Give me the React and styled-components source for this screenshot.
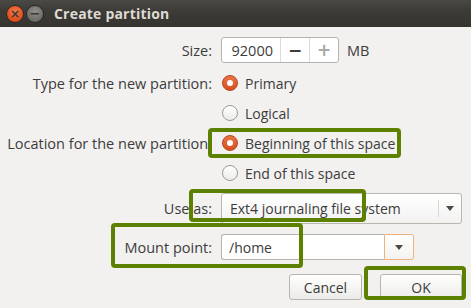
import React from "react"
import styled, { createGlobalStyle } from "styled-components"

const GlobalStyle = createGlobalStyle`
  html, body {
    margin: 0;
    padding: 0;
    background: #f2f1f0;
  }
  body {
    font-family: "Open Sans", "DejaVu Sans", sans-serif;
    font-size: 14px;
    color: #3c3c3c;
  }
`

const App = () => {
    return (
        <>
            <GlobalStyle />
            <Dialog>
                <TitleBar>
                    <WinButton $close>×</WinButton>
                    <WinButton>−</WinButton>
                    <Title>Create partition</Title>
                </TitleBar>
                <Form>
                    <Label>Size:</Label>
                    <Cell>
                        <SpinBox>
                            <SpinValue>92000</SpinValue>
                            <SpinBtn>−</SpinBtn>
                            <SpinBtn $disabled>+</SpinBtn>
                        </SpinBox>
                        <Unit>MB</Unit>
                    </Cell>

                    <Label $top={5}>Type for the new partition:</Label>
                    <Cell $top={5}>
                        <Radio $on />
                        <RadioText>Primary</RadioText>
                    </Cell>
                    <Label />
                    <Cell>
                        <Radio />
                        <RadioText>Logical</RadioText>
                    </Cell>

                    <Label>Location for the new partition:</Label>
                    <Cell>
                        <Radio $on />
                        <RadioText>Beginning of this space</RadioText>
                    </Cell>
                    <Label />
                    <Cell>
                        <Radio />
                        <RadioText>End of this space</RadioText>
                    </Cell>

                    <Label $top={5}>Use as:</Label>
                    <Cell $top={5}>
                        <Combo>
                            <ComboText>Ext4 journaling file system</ComboText>
                            <ComboArrow><Arrow /></ComboArrow>
                        </Combo>
                    </Cell>

                    <Label $top={10}>Mount point:</Label>
                    <Cell $top={10}>
                        <EntryCombo>
                            <EntryText>/home</EntryText>
                            <EntryArrow><Arrow /></EntryArrow>
                        </EntryCombo>
                    </Cell>
                </Form>
                <ButtonRow>
                    <Button>Cancel</Button>
                    <Button $wide>OK</Button>
                </ButtonRow>

                <Mark $x={208} $y={128} $w={193} $h={30} />
                <Mark $x={189} $y={189} $w={177} $h={33} />
                <Mark $x={111} $y={223} $w={192} $h={45} />
                <Mark $x={364} $y={266} $w={102} $h={34} />
            </Dialog>
        </>
    )
}

const Dialog = styled.div`
    position: relative;
    width: 471px;
    height: 308px;
    background: #f2f1f0;
    overflow: hidden;`

const TitleBar = styled.div`
    height: 27px;
    background: linear-gradient(#4a4944, #3c3b37 40%, #35342f);
    display: flex;
    align-items: center;
    padding-left: 6px;
    gap: 2px;`

const WinButton = styled.div`
    width: 18px;
    height: 18px;
    border-radius: 50%;
    box-sizing: border-box;
    display: flex;
    align-items: center;
    justify-content: center;
    font-family: "DejaVu Sans", sans-serif;
    font-size: ${p => p.$close ? '12px' : '13px'};
    font-weight: 700;
    line-height: 1;
    color: #3a3935;
    background: ${p => p.$close
        ? 'radial-gradient(circle at 50% 35%, #f27a4f, #e0531f 60%, #c8441a)'
        : 'radial-gradient(circle at 50% 35%, #8f8e88, #72716b 60%, #5f5e59)'};
    border: 1px solid #2a2926;`

const Title = styled.div`
    margin-left: 8px;
    font-weight: 700;
    font-size: 14px;
    color: #dfdbd2;
    letter-spacing: 0.2px;`

const Form = styled.div`
    display: grid;
    grid-template-columns: 212px 1fr;
    column-gap: 9px;
    padding-top: 10px;
    padding-right: 10px;`

const Label = styled.div`
    margin-top: ${p => p.$top || 0}px;
    display: flex;
    align-items: center;
    justify-content: flex-end;
    white-space: nowrap;
    text-align: right;
    font-size: 14.5px;`

const Cell = styled.div`
    margin-top: ${p => p.$top || 0}px;
    display: flex;
    align-items: center;
    min-height: 26px;`

const SpinBox = styled.div`
    display: flex;
    height: 26px;
    width: 118px;
    box-sizing: border-box;
    border: 1px solid #b6b3af;
    border-radius: 3px;
    background: #fff;
    overflow: hidden;`

const SpinValue = styled.div`
    flex: 1;
    display: flex;
    align-items: center;
    justify-content: flex-end;
    padding-right: 7px;
    font-size: 14.5px;`

const SpinBtn = styled.div`
    width: 28px;
    border-left: 1px solid #dcdad6;
    display: flex;
    align-items: center;
    justify-content: center;
    font-family: "DejaVu Sans", sans-serif;
    font-size: 17px;
    font-weight: 700;
    color: ${p => p.$disabled ? '#a9a9a6' : '#3c3c3c'};`

const Unit = styled.div`
    margin-left: 8px;
    font-size: 14.5px;`

const Radio = styled.div`
    width: 16px;
    height: 16px;
    box-sizing: border-box;
    border-radius: 50%;
    position: relative;
    flex-shrink: 0;
    margin-left: 1px;
    border: 1px solid ${p => p.$on ? '#b5441d' : '#9c9a97'};
    background: ${p => p.$on
        ? 'linear-gradient(#ea7446, #d7501f)'
        : 'linear-gradient(#ffffff, #ececea)'};

    &::after {
        content: "";
        display: ${p => p.$on ? 'block' : 'none'};
        position: absolute;
        left: 4px;
        top: 4px;
        width: 6px;
        height: 6px;
        border-radius: 50%;
        background: #fff;
    }`

const RadioText = styled.div`
    margin-left: 7px;
    height: 30px;
    display: flex;
    align-items: center;`

const Combo = styled.div`
    display: flex;
    width: 241px;
    height: 31px;
    box-sizing: border-box;
    border: 1px solid #bab6b0;
    border-radius: 3px;
    background: linear-gradient(#ffffff, #f3f2f1);`

const ComboText = styled.div`
    flex: 1;
    display: flex;
    align-items: center;
    padding-left: 8px;`

const ComboArrow = styled.div`
    width: 22px;
    margin: 6px 0;
    border-left: 1px solid #d8d6d2;
    display: flex;
    align-items: center;
    justify-content: center;`

const Arrow = styled.div`
    width: 0;
    height: 0;
    border-left: 4px solid transparent;
    border-right: 4px solid transparent;
    border-top: 5px solid #4a4a4a;`

const EntryCombo = styled.div`
    display: flex;
    width: 193px;
    height: 26px;
    box-sizing: border-box;`

const EntryText = styled.div`
    flex: 1;
    display: flex;
    align-items: center;
    padding-left: 7px;
    background: #fff;
    border: 1px solid #b6b3af;
    border-right: none;
    border-radius: 3px 0 0 3px;`

const EntryArrow = styled.div`
    width: 28px;
    display: flex;
    align-items: center;
    justify-content: center;
    background: linear-gradient(#ffffff, #f5f3f1);
    border: 1px solid #eeb27e;
    border-radius: 0 3px 3px 0;`

const ButtonRow = styled.div`
    display: flex;
    justify-content: flex-end;
    gap: 18px;
    padding: 14px 9px 0 0;`

const Button = styled.div`
    width: ${p => p.$wide ? '82px' : '73px'};
    height: 26px;
    box-sizing: border-box;
    border: 1px solid #b9b5ae;
    border-radius: 3px;
    background: linear-gradient(#ffffff, #ecebe9);
    display: flex;
    align-items: center;
    justify-content: center;`

const Mark = styled.div`
    position: absolute;
    left: ${p => p.$x}px;
    top: ${p => p.$y}px;
    width: ${p => p.$w}px;
    height: ${p => p.$h}px;
    box-sizing: border-box;
    border: 4px solid #5c8000;
    border-radius: 4px;
    pointer-events: none;`

export default App
